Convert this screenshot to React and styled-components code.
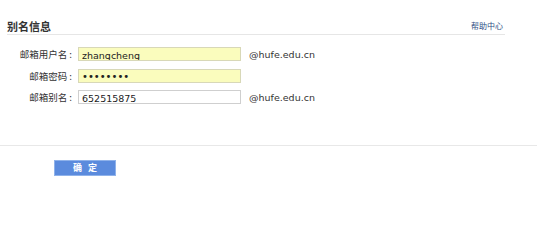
import React from "react";
import styled, { createGlobalStyle } from "styled-components";

const Global = createGlobalStyle`
  html, body { margin: 0; padding: 0; background: #fff; }
  body { font-family: "DejaVu Sans", "Noto Sans CJK SC", sans-serif; color: #333; }
`;

const Page = styled.div`
  width: 553px;
  height: 242px;
  display: flex;
  flex-direction: column;
`;

const Header = styled.div`
  margin: 18px 0 0 7px;
  width: 498px;
  height: 16px;
  display: flex;
  align-items: center;
  justify-content: space-between;
  border-bottom: 1px solid #e6e6e6;
`;

const Title = styled.h2`
  margin: 0;
  font-family: "Noto Sans CJK SC", sans-serif;
  font-size: 11px;
  font-weight: 700;
  line-height: 14px;
  color: #333;
`;

const HelpLink = styled.a`
  margin-right: 2px;
  font-family: "Noto Sans CJK SC", sans-serif;
  font-size: 8px;
  line-height: 12px;
  color: #2f4f86;
  text-decoration: none;
`;

const Form = styled.div`
  margin-top: 12px;
  display: flex;
  flex-direction: column;
  gap: 7.5px;
`;

const Row = styled.div`
  display: flex;
  align-items: center;
  height: 14px;
`;

const Label = styled.label`
  width: 72px;
  margin-right: 6px;
  text-align: right;
  font-family: "Noto Sans CJK SC", sans-serif;
  font-size: 9.5px;
  line-height: 14px;
  color: #333;
  white-space: nowrap;
`;

const Colon = styled.span`
  margin-left: 2px;
`;

const Input = styled.input`
  box-sizing: border-box;
  width: 163px;
  height: 14px;
  margin: 0;
  padding: 2px 3px 0;
  border: 1px solid ${(p) => (p.$filled ? "#d8d8b8" : "#cfcfcf")};
  background: ${(p) => (p.$filled ? "#fafcbd" : "#fff")};
  font-family: "DejaVu Sans", sans-serif;
  font-size: ${(p) => (p.type === "password" ? "10px" : "9.5px")};
  line-height: 12px;
  color: #222;
  outline: none;
`;

const Suffix = styled.span`
  margin-left: 8px;
  font-family: "DejaVu Sans", sans-serif;
  font-size: 9.5px;
  color: #333;
`;

const Footer = styled.div`
  margin-top: 41px;
  width: 537px;
  border-top: 1px solid #e8e8e8;
  padding: 10px 0 0 54px;
  box-sizing: border-box;
`;

const Button = styled.button`
  width: 62px;
  height: 16px;
  padding: 0;
  border: 1px solid #8fb2ea;
  background: #5b8bdd;
  color: #fff;
  font-family: "Noto Sans CJK SC", sans-serif;
  font-size: 9px;
  font-weight: 700;
  letter-spacing: 6px;
  text-indent: 6px;
  line-height: 14px;
  cursor: pointer;
`;

const rows = [
  { label: "邮箱用户名", value: "zhangcheng", type: "text", filled: true, suffix: "@hufe.edu.cn" },
  { label: "邮箱密码", value: "password", type: "password", filled: true },
  { label: "邮箱别名", value: "652515875", type: "text", filled: false, suffix: "@hufe.edu.cn" },
];

export default function App() {
  return (
    <Page>
      <Global />
      <Header>
        <Title>别名信息</Title>
        <HelpLink href="#">帮助中心</HelpLink>
      </Header>
      <Form>
        {rows.map((r) => (
          <Row key={r.label}>
            <Label>
              {r.label}
              <Colon>:</Colon>
            </Label>
            <Input type={r.type} defaultValue={r.value} $filled={r.filled} readOnly />
            {r.suffix && <Suffix>{r.suffix}</Suffix>}
          </Row>
        ))}
      </Form>
      <Footer>
        <Button>确定</Button>
      </Footer>
    </Page>
  );
}
